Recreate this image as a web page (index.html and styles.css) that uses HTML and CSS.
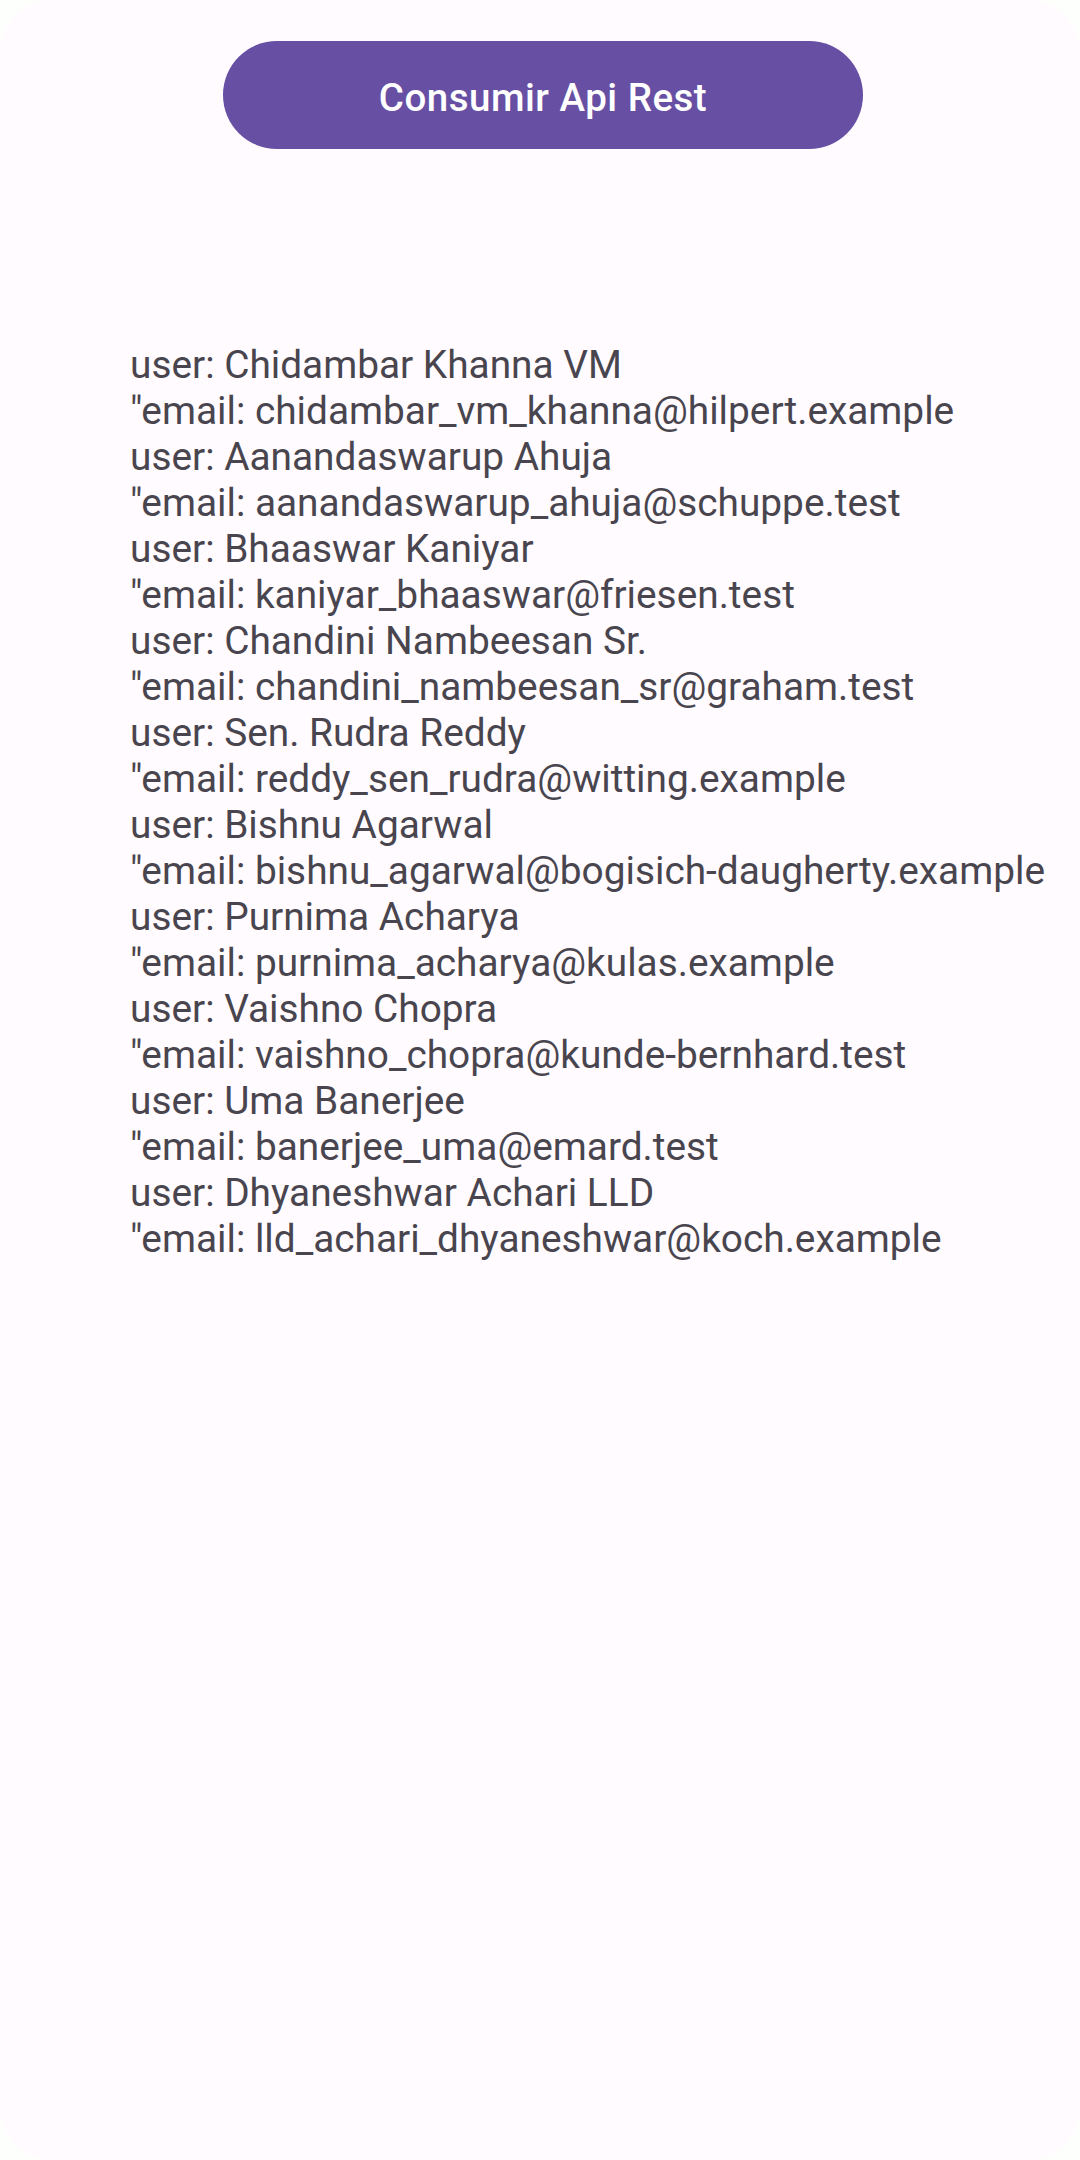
FILE: index.html
```html
<!DOCTYPE html>
<html lang="es">
<head>
<meta charset="utf-8">
<title>Consumir Api Rest</title>
<link rel="stylesheet" href="styles.css">
</head>
<body>
<div class="screen">
  <div class="top">
    <button class="btn">Consumir Api Rest</button>
  </div>
  <div class="list">
    <div class="line">user: Chidambar Khanna VM</div>
    <div class="line">"email: chidambar_vm_khanna@hilpert.example</div>
    <div class="line">user: Aanandaswarup Ahuja</div>
    <div class="line">"email: aanandaswarup_ahuja@schuppe.test</div>
    <div class="line">user: Bhaaswar Kaniyar</div>
    <div class="line">"email: kaniyar_bhaaswar@friesen.test</div>
    <div class="line">user: Chandini Nambeesan Sr.</div>
    <div class="line">"email: chandini_nambeesan_sr@graham.test</div>
    <div class="line">user: Sen. Rudra Reddy</div>
    <div class="line">"email: reddy_sen_rudra@witting.example</div>
    <div class="line">user: Bishnu Agarwal</div>
    <div class="line">"email: bishnu_agarwal@bogisich-daugherty.example</div>
    <div class="line">user: Purnima Acharya</div>
    <div class="line">"email: purnima_acharya@kulas.example</div>
    <div class="line">user: Vaishno Chopra</div>
    <div class="line">"email: vaishno_chopra@kunde-bernhard.test</div>
    <div class="line">user: Uma Banerjee</div>
    <div class="line">"email: banerjee_uma@emard.test</div>
    <div class="line">user: Dhyaneshwar Achari LLD</div>
    <div class="line">"email: lld_achari_dhyaneshwar@koch.example</div>
  </div>
</div>
</body>
</html>
```

FILE: styles.css
```css
html, body {
  margin: 0;
  padding: 0;
  background: #fdfffd;
}
.screen {
  width: 1080px;
  height: 2160px;
  background: #fffbfe;
  border-radius: 52px;
  overflow: hidden;
  font-family: Roboto, "Noto Sans", sans-serif;
  display: flex;
  flex-direction: column;
}
.top {
  display: flex;
  justify-content: center;
  padding-top: 41px;
  padding-left: 6px;
}
.btn {
  width: 640px;
  height: 108px;
  border: none;
  border-radius: 54px;
  background: #6750a4;
  color: #ffffff;
  font-family: Roboto, "Noto Sans", sans-serif;
  font-weight: 500;
  font-size: 38.5px;
  letter-spacing: 0.5px;
  padding: 4px 0 0 0;
}
.list {
  padding-top: 193px;
  padding-left: 130px;
  color: #49454f;
  font-size: 38.8px;
  line-height: 46px;
}
.line {
  white-space: nowrap;
}
```
